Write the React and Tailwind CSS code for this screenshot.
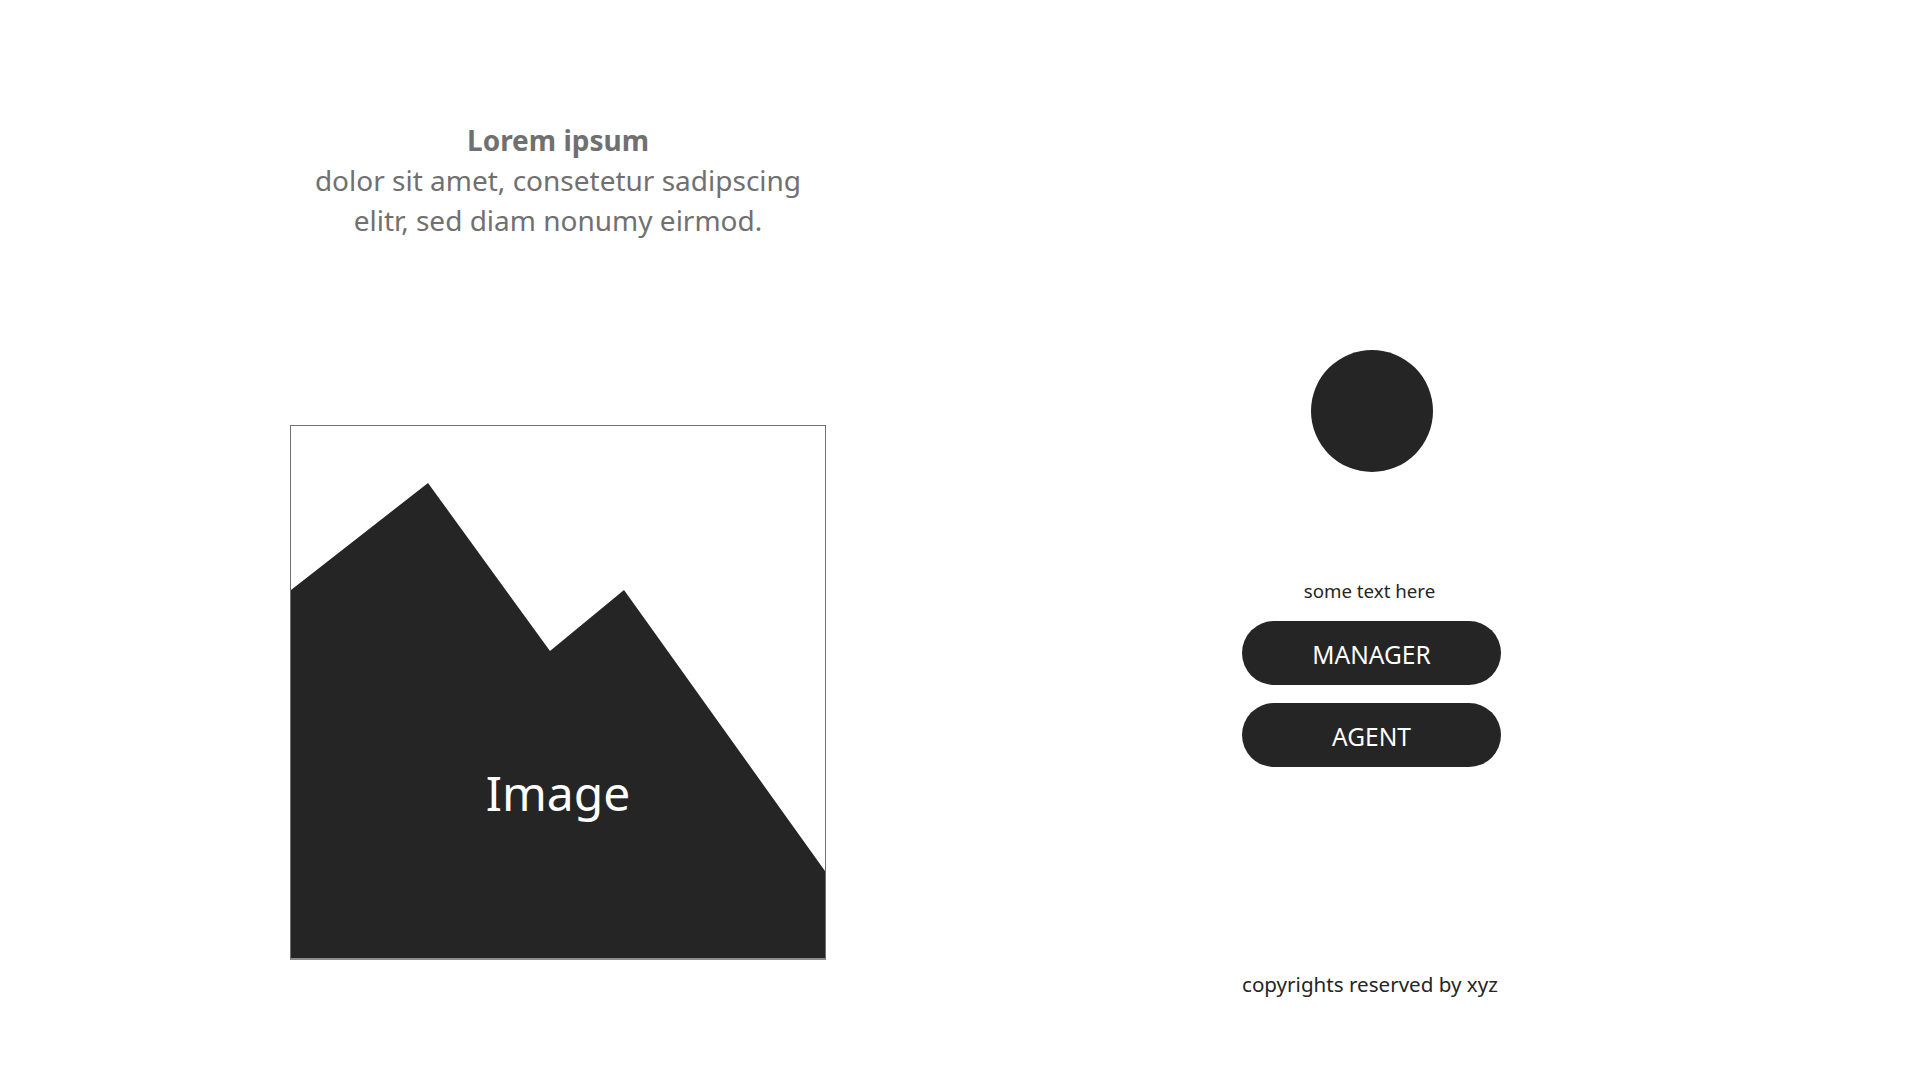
const font = { fontFamily: '"Noto Sans", "Open Sans", sans-serif' };

function ImagePlaceholder() {
  return (
    <div className="relative w-[536px] h-[535px] mt-[185px] border border-b-2 border-[#707070] border-b-[#8c8c8c]">
      <svg viewBox="0 0 534 532" className="block w-full h-full">
        <polygon points="0,164 137,57 259,225 333,164 534,445 534,532 0,532" fill="#252525" />
      </svg>
      <span className="absolute left-0 right-0 top-[334px] text-center text-[48px] leading-[66px] text-white">Image</span>
    </div>
  );
}

function RoleButton({ label }) {
  return (
    <button className="w-full h-[64px] rounded-[32px] bg-[#252525] text-white text-[24.5px] leading-[68px] text-center">
      {label}
    </button>
  );
}

export default function App() {
  return (
    <div className="w-[1917px] h-[1079px] bg-white flex overflow-hidden pl-[290px]" style={font}>
      {/* left side */}
      <div className="w-[536px] pt-[120px]">
        <div className="text-center text-[#707070] text-[28px] leading-[40px]">
          <p className="font-bold">Lorem ipsum</p>
          <p>dolor sit amet, consetetur sadipscing</p>
          <p>elitr, sed diam nonumy eirmod.</p>
        </div>
        <ImagePlaceholder />
      </div>

      {/* right side */}
      <div className="w-[259px] ml-[416px] pt-[350px] flex flex-col">
        <div className="w-[122px] h-[122px] rounded-full bg-[#252525] mx-auto" />
        <p className="mt-[105px] pr-[4px] text-center text-[18.7px] leading-[27px] text-[#252525]">some text here</p>
        <div className="mt-[17px] flex flex-col gap-[18px]">
          <RoleButton label="MANAGER" />
          <RoleButton label="AGENT" />
        </div>
        <p className="mt-[202px] text-[20.6px] leading-[30px] text-[#252525] whitespace-nowrap">copyrights reserved by xyz</p>
      </div>
    </div>
  );
}
